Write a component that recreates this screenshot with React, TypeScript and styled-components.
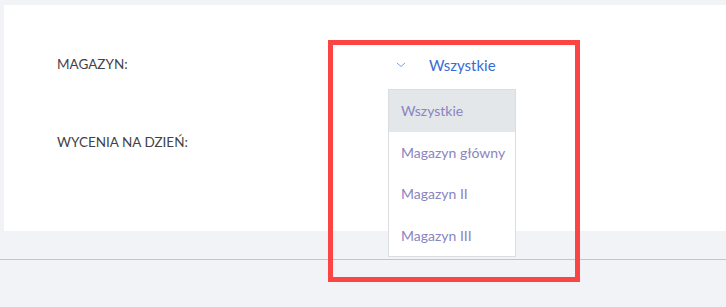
import React from 'react';
import styled, { createGlobalStyle } from 'styled-components';

const GlobalStyle = createGlobalStyle`
  html, body {
    margin: 0;
    padding: 0;
    background: #f2f3f7;
    font-family: Lato, "Open Sans", sans-serif;
  }
`;

const Page = styled.div`
  position: relative;
  width: 726px;
  height: 307px;
  overflow: hidden;
  background: #f2f3f7;
`;

const Card = styled.section`
  margin: 5px 0 0 4px;
  height: 226px;
  background: #ffffff;
  padding: 0 0 0 53px;
  box-sizing: border-box;
`;

const Form = styled.div`
  display: grid;
  grid-template-columns: 331px 200px;
  grid-auto-rows: 78px;
  padding-top: 21px;
`;

const Label = styled.div`
  display: flex;
  align-items: center;
  font-size: 13.5px;
  color: #3f4348;
  line-height: 1;
`;

const Field = styled.div`
  position: relative;
  display: flex;
  align-items: center;
`;

const Trigger = styled.div`
  display: flex;
  align-items: center;
  gap: 23px;
  padding-left: 8px;
  font-size: 15px;
  color: #3a6bd6;
`;

const Chevron = () => (
  <svg width="10" height="6" viewBox="0 0 10 6">
    <path d="M1 1l4 3.5L9 1" fill="none" stroke="#7f9fe0" strokeWidth="1" />
  </svg>
);

const Menu = styled.ul`
  position: absolute;
  left: 0;
  top: 63px;
  width: 128px;
  margin: 0;
  padding: 0;
  list-style: none;
  background: #ffffff;
  border: 1px solid #dcdde0;
  box-sizing: border-box;
  z-index: 2;
`;

const Option = styled.li<{ $active?: boolean }>`
  height: 41.5px;
  display: flex;
  align-items: center;
  padding-left: 12px;
  font-size: 14px;
  color: #8a84c0;
  background: ${(p) => (p.$active ? '#e3e7ea' : 'transparent')};
`;

const Divider = styled.hr`
  margin: 28px 0 0;
  border: none;
  border-top: 1px solid #c3c2da;
`;

const Highlight = styled.div`
  position: absolute;
  left: 328px;
  top: 40px;
  width: 252px;
  height: 242px;
  border: 5px solid #fb4444;
  box-sizing: border-box;
  pointer-events: none;
  z-index: 3;
`;

const options = ['Wszystkie', 'Magazyn główny', 'Magazyn II', 'Magazyn III'];

export default function App() {
  return (
    <Page>
      <GlobalStyle />
      <Card>
        <Form>
          <Label>MAGAZYN:</Label>
          <Field>
            <Trigger>
              <Chevron />
              <span>Wszystkie</span>
            </Trigger>
            <Menu>
              {options.map((o, i) => (
                <Option key={o} $active={i === 0}>
                  {o}
                </Option>
              ))}
            </Menu>
          </Field>
          <Label>WYCENIA NA DZIEŃ:</Label>
          <Field />
        </Form>
      </Card>
      <Divider />
      <Highlight />
    </Page>
  );
}
